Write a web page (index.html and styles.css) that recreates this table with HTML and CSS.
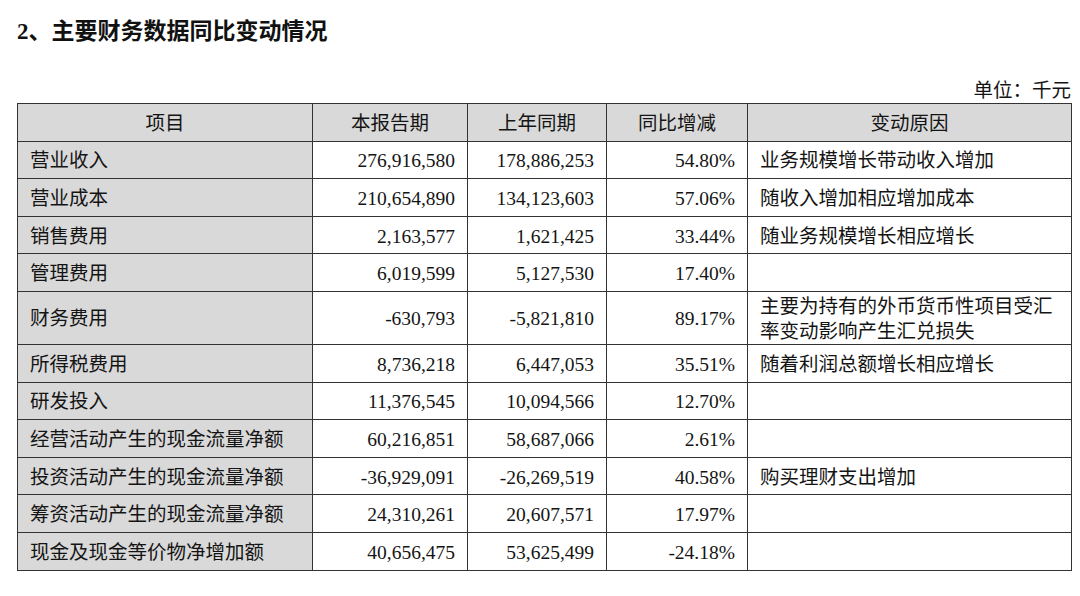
FILE: index.html
```html
<!DOCTYPE html>
<html lang="zh-CN">
<head>
<meta charset="utf-8">
<title>主要财务数据同比变动情况</title>
<link rel="stylesheet" href="styles.css">
</head>
<body>
<div class="page">
  <h2 class="title">2、主要财务数据同比变动情况</h2>
  <div class="unit">单位：千元</div>
  <table class="fin">
    <colgroup>
      <col class="c-item">
      <col class="c-cur">
      <col class="c-prev">
      <col class="c-yoy">
      <col class="c-reason">
    </colgroup>
    <thead>
      <tr>
        <th>项目</th>
        <th>本报告期</th>
        <th>上年同期</th>
        <th>同比增减</th>
        <th>变动原因</th>
      </tr>
    </thead>
    <tbody>
      <tr><td class="item">营业收入</td><td class="num">276,916,580</td><td class="num">178,886,253</td><td class="num">54.80%</td><td class="reason">业务规模增长带动收入增加</td></tr>
      <tr><td class="item">营业成本</td><td class="num">210,654,890</td><td class="num">134,123,603</td><td class="num">57.06%</td><td class="reason">随收入增加相应增加成本</td></tr>
      <tr><td class="item">销售费用</td><td class="num">2,163,577</td><td class="num">1,621,425</td><td class="num">33.44%</td><td class="reason">随业务规模增长相应增长</td></tr>
      <tr><td class="item">管理费用</td><td class="num">6,019,599</td><td class="num">5,127,530</td><td class="num">17.40%</td><td class="reason"></td></tr>
      <tr class="tall"><td class="item">财务费用</td><td class="num">-630,793</td><td class="num">-5,821,810</td><td class="num">89.17%</td><td class="reason">主要为持有的外币货币性项目受汇率变动影响产生汇兑损失</td></tr>
      <tr><td class="item">所得税费用</td><td class="num">8,736,218</td><td class="num">6,447,053</td><td class="num">35.51%</td><td class="reason">随着利润总额增长相应增长</td></tr>
      <tr><td class="item">研发投入</td><td class="num">11,376,545</td><td class="num">10,094,566</td><td class="num">12.70%</td><td class="reason"></td></tr>
      <tr><td class="item">经营活动产生的现金流量净额</td><td class="num">60,216,851</td><td class="num">58,687,066</td><td class="num">2.61%</td><td class="reason"></td></tr>
      <tr><td class="item">投资活动产生的现金流量净额</td><td class="num">-36,929,091</td><td class="num">-26,269,519</td><td class="num">40.58%</td><td class="reason">购买理财支出增加</td></tr>
      <tr><td class="item">筹资活动产生的现金流量净额</td><td class="num">24,310,261</td><td class="num">20,607,571</td><td class="num">17.97%</td><td class="reason"></td></tr>
      <tr><td class="item">现金及现金等价物净增加额</td><td class="num">40,656,475</td><td class="num">53,625,499</td><td class="num">-24.18%</td><td class="reason"></td></tr>
    </tbody>
  </table>
</div>
</body>
</html>
```

FILE: styles.css
```css
html, body {
  margin: 0;
  padding: 0;
  background: #ffffff;
}

body {
  font-family: "Liberation Serif", "Noto Sans CJK SC", serif;
  color: #141414;
}

.page {
  width: 1054px;
  padding: 0 9px 0 17px;
}

.title {
  margin: 0;
  padding-top: 18px;
  height: 30px;
  font-size: 23px;
  line-height: 28px;
  font-weight: bold;
  color: #111;
}

.unit {
  margin-top: 30px;
  height: 25px;
  text-align: right;
  font-size: 19.5px;
  line-height: 25px;
  padding-right: 0;
}

.fin {
  width: 1054px;
  border-collapse: collapse;
  table-layout: fixed;
  font-size: 19.5px;
}

.c-item { width: 295px; }
.c-cur { width: 155px; }
.c-prev { width: 139px; }
.c-yoy { width: 141px; }
.c-reason { width: 324px; }

.fin th,
.fin td {
  border: 1px solid #333;
  height: 37.6px;
  padding: 2px 12px 0;
  line-height: 25px;
  box-sizing: border-box;
  vertical-align: middle;
  white-space: nowrap;
}

.fin th {
  background: #d9d9d9;
  font-weight: normal;
  text-align: center;
}

.fin td.item {
  background: #d9d9d9;
  text-align: left;
}

.fin td.num {
  text-align: right;
}

.fin td.reason {
  text-align: left;
  white-space: normal;
}

.fin tr.tall td {
  height: 53px;
}
```
